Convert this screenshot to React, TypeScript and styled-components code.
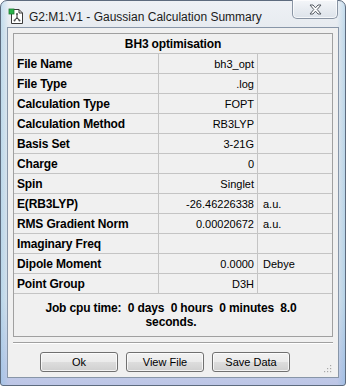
import styled, {createGlobalStyle} from 'styled-components';

const GlobalStyle = createGlobalStyle`
    html, body {
        margin: 0;
        padding: 0;
        background: #ffffff;
    }
    body {
        font-family: "Liberation Sans", Arial, sans-serif;
    }
`;

const rows: [string, string, string][] = [
    ['File Name', 'bh3_opt', ''],
    ['File Type', '.log', ''],
    ['Calculation Type', 'FOPT', ''],
    ['Calculation Method', 'RB3LYP', ''],
    ['Basis Set', '3-21G', ''],
    ['Charge', '0', ''],
    ['Spin', 'Singlet', ''],
    ['E(RB3LYP)', '-26.46226338', 'a.u.'],
    ['RMS Gradient Norm', '0.00020672', 'a.u.'],
    ['Imaginary Freq', '', ''],
    ['Dipole Moment', '0.0000', 'Debye'],
    ['Point Group', 'D3H', ''],
];

const Window = styled.div`
    box-sizing: border-box;
    width: 346px;
    height: 386px;
    padding: 0 6px 7px 6px;
    border: 1px solid #5d6b7e;
    border-radius: 7px 7px 3px 3px;
    background: linear-gradient(90deg, rgba(120, 190, 230, 0.35) 0, rgba(255, 255, 255, 0) 8px, rgba(255, 255, 255, 0) 336px, rgba(90, 170, 220, 0.35) 346px),
    linear-gradient(180deg, #eef1f5 0, #e6eaef 30px, #d9e2eb 300px, #bcc5e6 386px);
    display: flex;
    flex-direction: column;
`;

const TitleBar = styled.div`
    height: 27px;
    display: flex;
    align-items: flex-start;
`;

const TitleIcon = styled.svg`
    width: 16px;
    height: 16px;
    margin: 7px 0 0 1px;
    flex-shrink: 0;
`;

const TitleText = styled.div`
    margin: 8px 0 0 5px;
    font-size: 12px;
    line-height: 16px;
    color: #1b1b1b;
    white-space: nowrap;
`;

const CloseButton = styled.div`
    margin-left: auto;
    margin-right: 1px;
    margin-top: -1px;
    width: 46px;
    height: 19px;
    box-sizing: border-box;
    border: 1px solid #8a95a4;
    border-top: none;
    border-radius: 0 0 5px 5px;
    background: linear-gradient(180deg, #f4f6f9 0%, #e8ecf1 50%, #dde3ea 100%);
    box-shadow: inset 0 0 0 1px rgba(255, 255, 255, 0.7);
    display: flex;
    align-items: center;
    justify-content: center;
`;

const Client = styled.div`
    box-sizing: border-box;
    flex: 1;
    border: 1px solid #8896a8;
    background: #f0f0f0;
    padding: 5px;
    display: flex;
    flex-direction: column;
    position: relative;
`;

const Panel = styled.div`
    box-sizing: border-box;
    height: 304px;
    border: 1px solid #a0a0a0;
    display: flex;
    flex-direction: column;
`;

const Header = styled.div`
    height: 20px;
    box-sizing: border-box;
    border-bottom: 1px solid #c4c4c4;
    padding-top: 1px;
    text-align: center;
    font-size: 12px;
    font-weight: bold;
    letter-spacing: -0.15px;
    line-height: 18px;
    color: #000;
`;

const Row = styled.div`
    height: 20px;
    box-sizing: border-box;
    border-bottom: 1px solid #c4c4c4;
    display: grid;
    grid-template-columns: 145px 99px 1fr;
`;

const LabelCell = styled.div`
    border-right: 1px solid #c4c4c4;
    padding: 1px 0 0 3px;
    font-size: 12px;
    font-weight: bold;
    letter-spacing: -0.15px;
    line-height: 18px;
    color: #000;
    white-space: nowrap;
`;

const ValueCell = styled.div<{ $align: 'left' | 'right' }>`
    border-right: ${p => p.$align === 'right' ? '1px solid #c4c4c4' : 'none'};
    padding: ${p => p.$align === 'right' ? '1px 3px 0 0' : '1px 0 0 5px'};
    text-align: ${p => p.$align};
    font-size: 11px;
    line-height: 18px;
    color: #000;
    white-space: nowrap;
`;

const JobTime = styled.div`
    flex: 1;
    padding-top: 7px;
    padding-right: 4px;
    text-align: center;
    font-size: 12px;
    font-weight: bold;
    letter-spacing: -0.15px;
    line-height: 14px;
    white-space: pre;
    color: #000;
`;

const Separator = styled.div`
    margin-top: 5px;
    height: 0;
    border-top: 1px solid #a0a0a0;
    border-bottom: 1px solid #ffffff;
`;

const ButtonRow = styled.div`
    margin-top: 8px;
    padding-left: 27px;
    display: flex;
    gap: 8px;
`;

const Button = styled.button`
    box-sizing: border-box;
    width: 78px;
    height: 20px;
    padding: 0;
    border: 1px solid #707070;
    border-radius: 3px;
    background: linear-gradient(180deg, #f2f2f2 0%, #ebebeb 48%, #dddddd 52%, #cfcfcf 100%);
    box-shadow: inset 0 0 0 1px rgba(255, 255, 255, 0.75);
    font-family: "Liberation Sans", Arial, sans-serif;
    font-size: 11px;
    line-height: 18px;
    color: #000;
`;

const Grip = styled.svg`
    position: absolute;
    right: 6px;
    bottom: 4px;
    width: 9px;
    height: 9px;
`;

function AppIcon() {
    return (
        <TitleIcon viewBox="0 0 16 16">
            <path d="M3.5 1.5 H11 L14.5 5 V15.5 H3.5 Z" fill="#ffffff" stroke="#3a3a3a"/>
            <path d="M11 1.5 V5 H14.5" fill="none" stroke="#3a3a3a"/>
            <rect x="1" y="1" width="5" height="5" fill="#29b34a" stroke="#1f7a33" strokeWidth="0.8"/>
            <path d="M9 6 V9.5 M9 9.5 L6.5 12.5 M9 9.5 L11.5 12.5" stroke="#404040" strokeWidth="1.1" fill="none"/>
            <circle cx="9" cy="6" r="1" fill="#505050"/>
            <circle cx="6.5" cy="12.5" r="1" fill="#505050"/>
            <circle cx="11.5" cy="12.5" r="1" fill="#505050"/>
        </TitleIcon>
    );
}

function CloseGlyph() {
    return (
        <svg width="13" height="11" viewBox="0 0 13 11">
            <path d="M1 1 H4 L6.5 3.8 L9 1 H12 L8.2 5.5 L12 10 H9 L6.5 7.2 L4 10 H1 L4.8 5.5 Z"
                  fill="#ffffff" stroke="#555b63" strokeWidth="1" strokeLinejoin="round"/>
        </svg>
    );
}

export default function App() {
    return (
        <>
            <GlobalStyle/>
            <Window>
                <TitleBar>
                    <AppIcon/>
                    <TitleText>G2:M1:V1 - Gaussian Calculation Summary</TitleText>
                    <CloseButton><CloseGlyph/></CloseButton>
                </TitleBar>
                <Client>
                    <Panel>
                        <Header>BH3 optimisation</Header>
                        {rows.map(([label, value, unit]) => (
                            <Row key={label}>
                                <LabelCell>{label}</LabelCell>
                                <ValueCell $align="right">{value}</ValueCell>
                                <ValueCell $align="left">{unit}</ValueCell>
                            </Row>
                        ))}
                        <JobTime>{'Job cpu time:  0 days  0 hours  0 minutes  8.0\nseconds.'}</JobTime>
                    </Panel>
                    <Separator/>
                    <ButtonRow>
                        <Button>Ok</Button>
                        <Button>View File</Button>
                        <Button>Save Data</Button>
                    </ButtonRow>
                    <Grip viewBox="0 0 9 9">
                        <rect x="7" y="1" width="1.2" height="1.2" fill="#a8a8a8"/>
                        <rect x="4" y="4" width="1.2" height="1.2" fill="#a8a8a8"/>
                        <rect x="7" y="4" width="1.2" height="1.2" fill="#a8a8a8"/>
                        <rect x="1" y="7" width="1.2" height="1.2" fill="#a8a8a8"/>
                        <rect x="4" y="7" width="1.2" height="1.2" fill="#a8a8a8"/>
                        <rect x="7" y="7" width="1.2" height="1.2" fill="#a8a8a8"/>
                    </Grip>
                </Client>
            </Window>
        </>
    );
}
